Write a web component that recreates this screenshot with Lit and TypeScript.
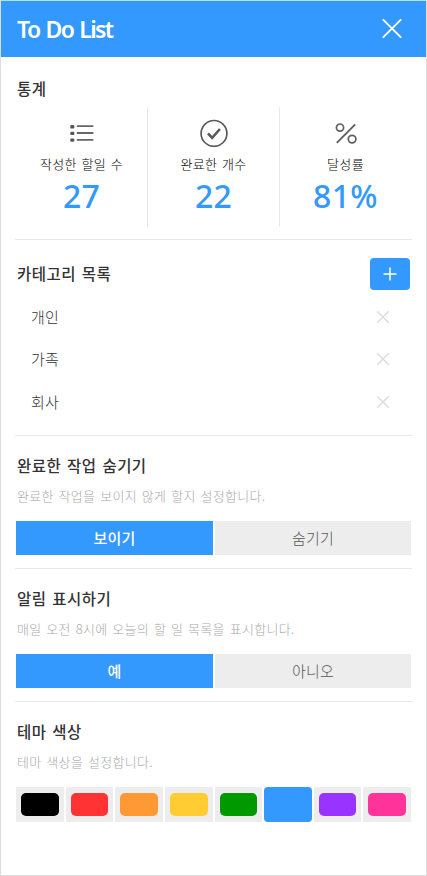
import { LitElement, html, css, svg } from "lit";
import { customElement, state } from "lit/decorators.js";
import { classMap } from "lit/directives/class-map.js";
import { styleMap } from "lit/directives/style-map.js";

const listIcon = svg`<svg class="icon" width="28" height="28" viewBox="0 0 28 28">
  <g fill="#555"><rect x="2.3" y="6" width="4" height="3.4" rx="1"/><rect x="2.3" y="12.7" width="4" height="3.4" rx="1"/><rect x="2.3" y="19.4" width="4" height="3.4" rx="1"/></g>
  <path d="M8.8 7.2H25.4M8.8 14H25.4M8.8 20.8H25.4" stroke="#666" stroke-width="1.8"/></svg>`;
const checkIcon = svg`<svg class="icon" width="28" height="28" viewBox="0 0 28 28" fill="none" stroke="#5a5a5a">
  <circle cx="14" cy="14.4" r="12.9" stroke-width="1.7"/><path d="M8 14.5L12.2 18.8L19.9 10" stroke-width="2.6"/></svg>`;
const percentIcon = svg`<svg class="icon" width="28" height="28" viewBox="0 0 28 28" fill="none" stroke="#5f5f5f">
  <circle cx="8" cy="8.6" r="3.6" stroke-width="1.7"/><circle cx="20.1" cy="20.1" r="3.8" stroke-width="1.7"/><path d="M4.8 23.8L23.2 5.3" stroke-width="1.9"/></svg>`;

@customElement("app-root")
export class AppRoot extends LitElement {
  @state() private hideDone = 0;
  @state() private notify = 0;
  @state() private theme = 5;

  private stats = [
    { icon: listIcon, label: "작성한 할일 수", value: "27" },
    { icon: checkIcon, label: "완료한 개수", value: "22" },
    { icon: percentIcon, label: "달성률", value: "81%" },
  ];
  private categories = ["개인", "가족", "회사"];
  private colors = ["#000000", "#ff3333", "#ff9933", "#ffcc33", "#009900", "#3399ff", "#9933ff", "#ff3399"];

  static styles = css`
    :host {
      display: block;
      box-sizing: border-box;
      height: 876px;
      background: #fff;
      border: 1px solid #ddd;
      border-top-color: #aee6f5;
      font-family: "Noto Sans CJK KR", sans-serif;
      color: #333;
      overflow: hidden;
    }
    * { box-sizing: border-box; }
    header {
      height: 56px;
      background: #3399ff;
      color: #fff;
      display: flex;
      align-items: center;
      justify-content: space-between;
      padding: 0 23px 0 16px;
    }
    h1 {
      margin: 0;
      font: 600 23px/56px "Noto Sans", sans-serif;
      letter-spacing: -1.6px;
      word-spacing: 1.6px;
    }
    svg { display: block; }
    section {
      margin: 0 14px;
      padding: 18px 1px 0;
      height: 133px;
      border-bottom: 1px solid #e8e8e8;
    }
    section:last-child { border: 0; }
    .statistics { height: 183px; padding-top: 19px; }
    .category { height: 196px; }
    h2 {
      margin: 0 0 0 1px;
      font-size: 15.5px;
      font-weight: 500;
      line-height: 22px;
      letter-spacing: 0.45px;
      word-spacing: 2px;
    }
    .statistics h2 { line-height: 24px; }
    .category h2 { padding-bottom: 2px; }
    .stats { display: grid; grid-template-columns: 132px 132px 131px; height: 120px; margin-top: 7px; }
    .stat {
      display: flex;
      flex-direction: column;
      align-items: center;
      padding-top: 12px;
      border-right: 1px solid #e8e8e8;
    }
    .stat:last-child { border: 0; }
    .label {
      color: #000;
      font-size: 13px;
      font-weight: 300;
      line-height: 20px;
      letter-spacing: 0.3px;
      word-spacing: 1.5px;
      margin-top: 7px;
    }
    .value { font: 500 32px/36px "Noto Sans", sans-serif; letter-spacing: 0.3px; color: #3399ff; margin-top: 4px; }
    .bar { display: flex; align-items: center; justify-content: space-between; height: 32px; padding-right: 1px; }
    .add {
      width: 40px;
      height: 32px;
      padding: 0;
      border: 0;
      border-radius: 4px;
      background: #3399ff;
      display: grid;
      place-items: center;
    }
    .rows { padding: 6px 21.5px 0 15px; }
    .row {
      height: 42.3px;
      display: flex;
      align-items: center;
      justify-content: space-between;
      font-size: 15px;
      font-weight: 300;
      letter-spacing: 0.3px;
    }
    .row span { padding-bottom: 1px; }
    .desc {
      margin: 10px 0 0 1px;
      font-size: 13px;
      font-weight: 300;
      line-height: 20px;
      letter-spacing: 0.3px;
      word-spacing: 1.65px;
      color: #aaa;
    }
    .toggle { display: grid; grid-template-columns: 197px 196px; gap: 2px; margin-top: 15px; }
    .toggle button {
      height: 34px;
      padding: 0;
      border: 0;
      background: #ededed;
      color: #555;
      font: 300 15px/34px "Noto Sans CJK KR", sans-serif;
      letter-spacing: 0.2px;
    }
    .toggle button.on { background: #3399ff; color: #fff; font-weight: 500; }
    .palette { display: grid; grid-template-columns: repeat(8, 1fr); gap: 2px; width: 395px; margin-top: 15px; }
    .swatch { height: 35px; padding: 6px 5px; background: #ededed; border: 0; display: block; }
    .color { display: block; height: 23px; border-radius: 5px; }
    .swatch.on { padding: 0; background: none; }
    .swatch.on .color { height: 35px; border-radius: 4px; }
  `;

  private toggle(labels: string[], current: number, pick: (i: number) => void) {
    return html`<div class="toggle">${labels.map((label, i) => html`
      <button class=${classMap({ on: i === current })} @click=${() => pick(i)}>${label}</button>`)}</div>`;
  }

  render() {
    return html`
      <header>
        <h1>To Do List</h1>
        <svg width="22" height="22" viewBox="0 0 22 22"><path d="M2.3 1.8L19.7 19.2M19.7 1.8L2.3 19.2" stroke="#fff" stroke-width="1.9" stroke-linecap="round"/></svg>
      </header>
      <section class="statistics">
        <h2>통계</h2>
        <div class="stats">${this.stats.map((s) => html`
          <div class="stat">${s.icon}<span class="label">${s.label}</span><span class="value">${s.value}</span></div>`)}
        </div>
      </section>
      <section class="category">
        <div class="bar">
          <h2>카테고리 목록</h2>
          <button class="add"><svg width="14" height="14" viewBox="0 0 14 14"><path d="M7 0.5V13.5M0.5 7H13.5" stroke="#fff" stroke-width="1.5"/></svg></button>
        </div>
        <div class="rows">${this.categories.map((c) => html`
          <div class="row"><span>${c}</span><svg width="14" height="14" viewBox="0 0 14 14"><path d="M1.2 1.2L12.8 12.8M12.8 1.2L1.2 12.8" stroke="#ddd" stroke-width="1.5"/></svg></div>`)}
        </div>
      </section>
      <section>
        <h2>완료한 작업 숨기기</h2>
        <p class="desc">완료한 작업을 보이지 않게 할지 설정합니다.</p>
        ${this.toggle(["보이기", "숨기기"], this.hideDone, (i) => (this.hideDone = i))}
      </section>
      <section>
        <h2>알림 표시하기</h2>
        <p class="desc">매일 오전 8시에 오늘의 할 일 목록을 표시합니다.</p>
        ${this.toggle(["예", "아니오"], this.notify, (i) => (this.notify = i))}
      </section>
      <section>
        <h2>테마 색상</h2>
        <p class="desc">테마 색상을 설정합니다.</p>
        <div class="palette">${this.colors.map((c, i) => html`
          <button class=${classMap({ swatch: true, on: i === this.theme })} @click=${() => (this.theme = i)}>
            <span class="color" style=${styleMap({ background: c })}></span>
          </button>`)}
        </div>
      </section>`;
  }
}
